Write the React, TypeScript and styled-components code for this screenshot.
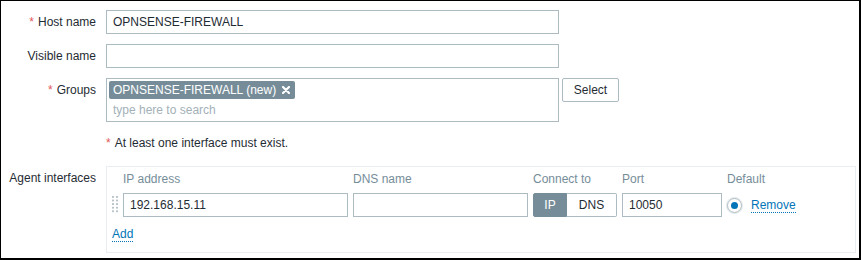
import React from 'react';
import styled, { createGlobalStyle } from 'styled-components';

const Global = createGlobalStyle`
  html, body { margin: 0; padding: 0; background: #fff; }
  body {
    font-family: "Liberation Sans", Arial, sans-serif;
    font-size: 12px;
    color: #1f2c33;
  }
  * { box-sizing: border-box; }
`;

const Frame = styled.div`
  width: 861px;
  height: 260px;
  border: 1px solid #000;
  border-right-width: 2px;
  border-bottom-width: 2px;
  background: #fff;
  padding-top: 9px;
`;

const Form = styled.div`
  display: grid;
  grid-template-columns: 95px 750px;
  column-gap: 10px;
  row-gap: 10px;
  align-items: start;
`;

const Label = styled.div`
  text-align: right;
  line-height: 24px;
  white-space: nowrap;
`;

const Req = styled.span`
  color: #e45959;
  margin-right: 4px;
`;

const TextInput = styled.div<{ $w: number }>`
  width: ${p => p.$w}px;
  height: 24px;
  border: 1px solid #acbbc2;
  background: #fff;
  padding: 0 6px;
  line-height: 22px;
  white-space: nowrap;
  overflow: hidden;
`;

const GroupRow = styled.div`
  display: flex;
  align-items: flex-start;
  gap: 3px;
`;

const MultiSelect = styled.div`
  width: 453px;
  height: 44px;
  border: 1px solid #acbbc2;
  padding: 2px 2px 0;
`;

const Tag = styled.span`
  display: inline-flex;
  align-items: center;
  height: 18px;
  background: #768d99;
  color: #fff;
  border-radius: 2px;
  padding: 0 5px 0 4px;
  gap: 6px;
  line-height: 18px;
`;

const Placeholder = styled.div`
  color: #a3b1b8;
  line-height: 16px;
  padding: 3px 0 0 4px;
`;

const Button = styled.div`
  width: 57px;
  height: 24px;
  border: 1px solid #acbbc2;
  border-radius: 2px;
  background: #fff;
  text-align: center;
  line-height: 22px;
`;

const ErrorLine = styled.div`
  line-height: 14px;
  padding: 4px 0 6px;
`;

const Box = styled.div`
  width: 750px;
  border: 1px solid #ebeef0;
  padding: 5px 0 10px 5px;
`;

const IfaceGrid = styled.div`
  display: grid;
  grid-template-columns: 6px 225px 175px 84px 100px auto;
  column-gap: 5px;
  row-gap: 7px;
  align-items: center;
`;

const Header = styled.div`
  color: #768d99;
  line-height: 14px;
  white-space: nowrap;
`;

const Handle = styled.div`
  width: 6px;
  height: 18px;
  background-image: radial-gradient(circle at 1px 1px, #b7c3c9 1px, transparent 1.3px);
  background-size: 4px 3.6px;
`;

const Toggle = styled.div`
  display: flex;
  height: 24px;
`;

const ToggleBtn = styled.div<{ $active?: boolean; $w: number }>`
  width: ${p => p.$w}px;
  height: 24px;
  line-height: 22px;
  text-align: center;
  border: 1px solid ${p => (p.$active ? '#768d99' : '#acbbc2')};
  border-left-width: ${p => (p.$active ? '1px' : '0')};
  background: ${p => (p.$active ? '#768d99' : '#fff')};
  color: ${p => (p.$active ? '#fff' : '#1f2c33')};
  border-radius: ${p => (p.$active ? '2px 0 0 2px' : '0 2px 2px 0')};
`;

const DefaultCell = styled.div`
  display: flex;
  align-items: center;
  gap: 9px;
`;

const Radio = styled.span`
  width: 15px;
  height: 15px;
  border-radius: 50%;
  border: 1px solid #acbbc2;
  display: inline-flex;
  align-items: center;
  justify-content: center;
  box-shadow: 0 0 0 1px #e4e9eb;
  &::after {
    content: '';
    width: 7px;
    height: 7px;
    border-radius: 50%;
    background: #0275b8;
  }
`;

const Link = styled.span`
  color: #0275b8;
  line-height: 14px;
  border-bottom: 1px dotted #0275b8;
`;

const AddRow = styled.div`
  grid-column: 1 / -1;
  margin-top: 3px;
  display: flex;
`;

const CloseIcon = () => (
  <svg width="8" height="8" viewBox="0 0 8 8">
    <path d="M1 1 L7 7 M7 1 L1 7" stroke="#fff" strokeWidth="2.2" strokeLinecap="round" />
  </svg>
);

export default function App() {
  return (
    <>
      <Global />
      <Frame>
        <Form>
          <Label><Req>*</Req>Host name</Label>
          <TextInput $w={453}>OPNSENSE-FIREWALL</TextInput>

          <Label>Visible name</Label>
          <TextInput $w={453} />

          <Label><Req>*</Req>Groups</Label>
          <GroupRow>
            <MultiSelect>
              <Tag>OPNSENSE-FIREWALL (new)<CloseIcon /></Tag>
              <Placeholder>type here to search</Placeholder>
            </MultiSelect>
            <Button>Select</Button>
          </GroupRow>

          <div />
          <ErrorLine><Req>*</Req>At least one interface must exist.</ErrorLine>

          <Label>Agent interfaces</Label>
          <Box>
            <IfaceGrid>
              <div />
              <Header>IP address</Header>
              <Header>DNS name</Header>
              <Header>Connect to</Header>
              <Header>Port</Header>
              <Header>Default</Header>

              <Handle />
              <TextInput $w={225}>192.168.15.11</TextInput>
              <TextInput $w={175} />
              <Toggle>
                <ToggleBtn $active $w={34}>IP</ToggleBtn>
                <ToggleBtn $w={50}>DNS</ToggleBtn>
              </Toggle>
              <TextInput $w={100}>10050</TextInput>
              <DefaultCell>
                <Radio />
                <Link>Remove</Link>
              </DefaultCell>

              <AddRow><Link>Add</Link></AddRow>
            </IfaceGrid>
          </Box>
        </Form>
      </Frame>
    </>
  );
}
